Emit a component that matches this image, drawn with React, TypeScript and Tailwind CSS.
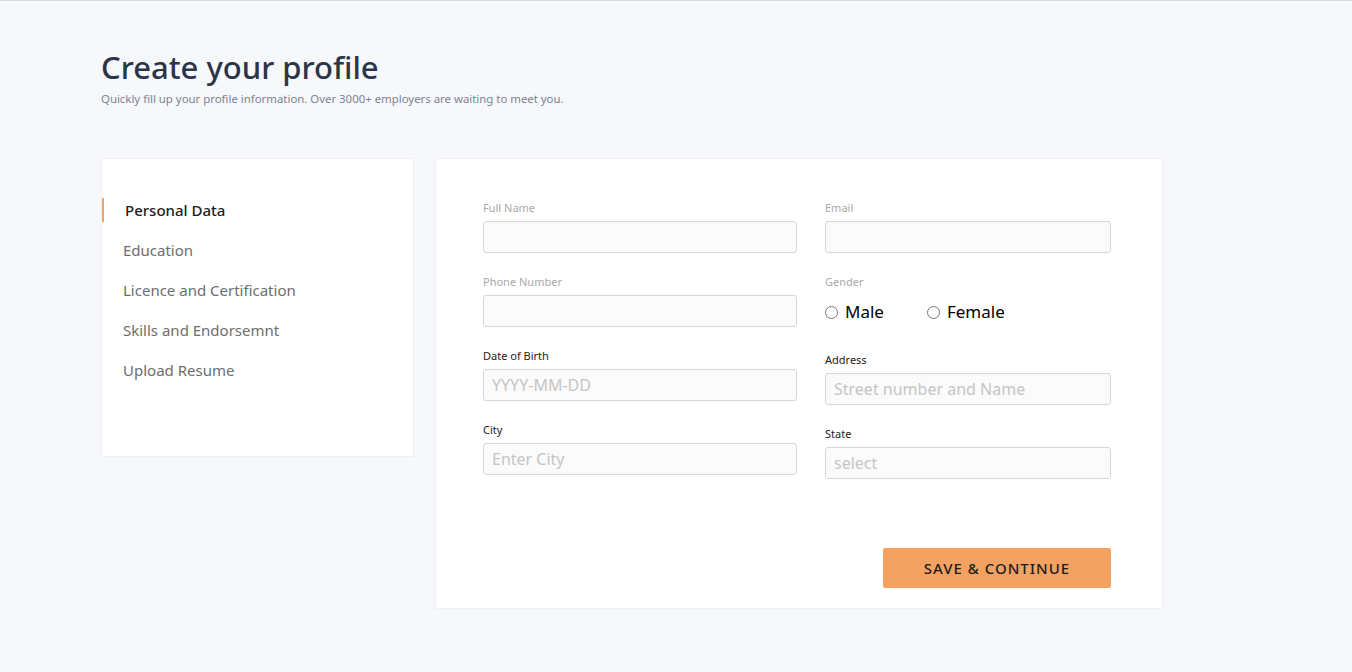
import React from 'react';

const font = { fontFamily: '"Noto Sans", "Open Sans", sans-serif' };

const navItems = ['Personal Data', 'Education', 'Licence and Certification', 'Skills and Endorsemnt', 'Upload Resume'];

function Field({ label, placeholder, dark }: { label: string; placeholder?: string; dark?: boolean }) {
  return (
    <div className="flex flex-col">
      <label className={`h-[14px] text-[11px] leading-[14px] ${dark ? 'text-[#222]' : 'text-[#a9a9a9]'}`}>{label}</label>
      <input
        placeholder={placeholder}
        className="mt-[6px] h-[32px] w-full rounded-[3px] border border-[#d3d6dc] bg-[#fbfbfb] px-[8px] text-[16px] text-[#333] outline-none placeholder:text-[#c5c5c5]"
      />
    </div>
  );
}

function App() {
  const [active] = React.useState(0);

  return (
    <div className="min-h-screen border-t border-[#d8dbe2] bg-[#f7f8fc]" style={font}>
      <div className="pl-[101px] pt-[47px]">
        <h1 className="text-[31px] font-medium leading-[38px] text-[#2a3547]">Create your profile</h1>
        <p className="mt-[6px] text-[11.4px] leading-[14px] text-[#7c8391]">
          Quickly fill up your profile information. Over 3000+ employers are waiting to meet you.
        </p>

        <div className="mt-[52px] flex items-start gap-[21px]">
          <aside className="h-[299px] w-[313px] border border-[#eef0f4] bg-white pt-[31px]">
            {navItems.map((item, i) => (
              <div key={item} className="flex h-[40px] items-center">
                {i === active ? (
                  <div className="flex h-[24px] items-center border-l-[2px] border-[#f4a261] pl-[21px] text-[15px] font-medium text-[#222]">
                    {item}
                  </div>
                ) : (
                  <div className="pl-[21px] text-[15px] text-[#6e6e6e]">{item}</div>
                )}
              </div>
            ))}
          </aside>

          <main className="flex h-[451px] w-[728px] flex-col border border-[#eef0f4] bg-white px-[47px] pb-[20px] pt-[42px]">
            <div className="flex gap-[28px]">
              <div className="flex w-[314px] flex-col gap-[22px]">
                <Field label="Full Name" />
                <Field label="Phone Number" />
                <Field label="Date of Birth" placeholder="YYYY-MM-DD" dark />
                <Field label="City" placeholder="Enter City" dark />
              </div>
              <div className="flex w-[286px] flex-col gap-[22px]">
                <Field label="Email" />
                <div className="flex h-[56px] flex-col">
                  <label className="h-[14px] text-[11px] leading-[14px] text-[#a9a9a9]">Gender</label>
                  <div className="mt-[9px] flex h-[28px] items-center">
                    <label className="flex items-center gap-[7px] text-[17px] text-black">
                      <input type="radio" name="gender" className="m-0 h-[13px] w-[13px]" />
                      Male
                    </label>
                    <label className="ml-[43px] flex items-center gap-[7px] text-[17px] text-black">
                      <input type="radio" name="gender" className="m-0 h-[13px] w-[13px]" />
                      Female
                    </label>
                  </div>
                </div>
                <Field label="Address" placeholder="Street number and Name" dark />
                <Field label="State" placeholder="select" dark />
              </div>
            </div>
            <div className="mt-auto flex justify-end pr-[4px]">
              <button className="h-[40px] w-[228px] rounded-[2px] bg-[#f4a261] text-[15px] font-medium tracking-[1px] text-[#1c1c1c]">
                SAVE &amp; CONTINUE
              </button>
            </div>
          </main>
        </div>
      </div>
    </div>
  );
}

export default App;
